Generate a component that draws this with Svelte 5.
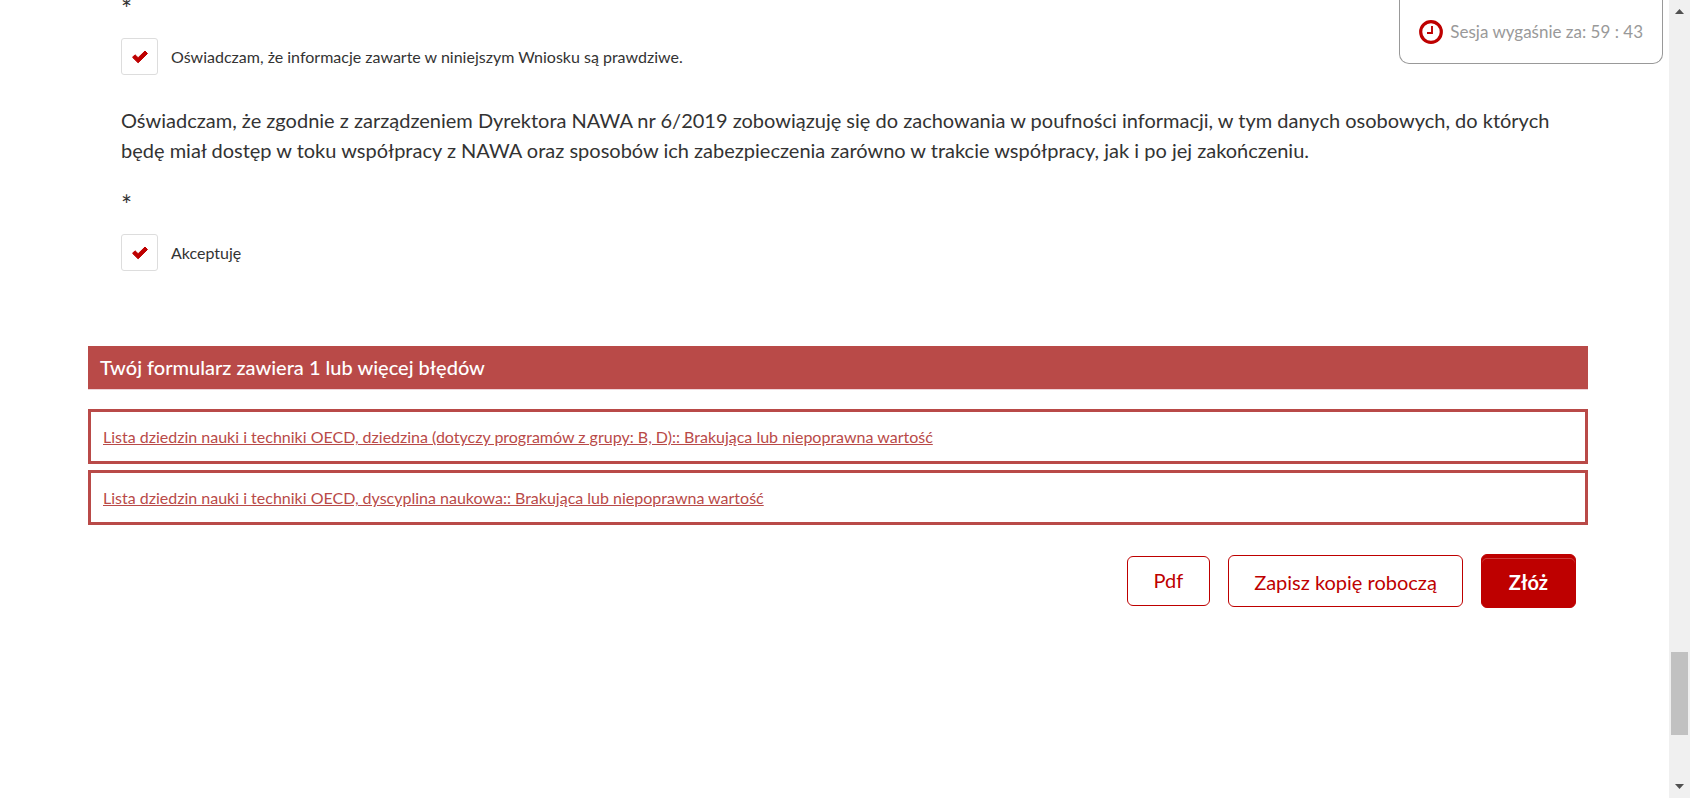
<script>
  let truthful = $state(true);
  let accepted = $state(true);
  const errors = [
    { id: 'dziedzina', text: 'Lista dziedzin nauki i techniki OECD, dziedzina (dotyczy programów z grupy: B, D):: Brakująca lub niepoprawna wartość' },
    { id: 'dyscyplina', text: 'Lista dziedzin nauki i techniki OECD, dyscyplina naukowa:: Brakująca lub niepoprawna wartość' }
  ];
</script>

{#snippet tick()}
  <svg class="tick" viewBox="0 0 16 14" aria-hidden="true">
    <path d="M0.5 7.3 L3 4.8 L6.1 7.7 L13 1 L15.5 3.5 L6.1 12.8 Z" />
  </svg>
{/snippet}

<div class="window">
  <main>
    <form onsubmit={(e) => e.preventDefault()}>
      <section class="statements">
        <p class="required">*</p>
        <label class="check">
          <input type="checkbox" bind:checked={truthful} />
          <span class="box">{@render tick()}</span>
          <span>Oświadczam, że informacje zawarte w niniejszym Wniosku są prawdziwe.</span>
        </label>
        <p class="text">
          Oświadczam, że zgodnie z zarządzeniem Dyrektora NAWA nr 6/2019 zobowiązuję się do zachowania w poufności informacji, w tym danych osobowych, do których będę miał dostęp w toku współpracy z NAWA oraz sposobów ich zabezpieczenia zarówno w trakcie współpracy, jak i po jej zakończeniu.
        </p>
        <p class="required">*</p>
        <label class="check">
          <input type="checkbox" bind:checked={accepted} />
          <span class="box">{@render tick()}</span>
          <span>Akceptuję</span>
        </label>
      </section>

      <section class="errors">
        <h2>Twój formularz zawiera 1 lub więcej błędów</h2>
        <ul>
          {#each errors as error (error.id)}
            <li><a href={'#' + error.id}>{error.text}</a></li>
          {/each}
        </ul>
      </section>

      <div class="actions">
        <button type="button" class="pdf">Pdf</button>
        <button type="button" class="draft">Zapisz kopię roboczą</button>
        <button type="submit" class="submit">Złóż</button>
      </div>
    </form>

    <div class="session">
      <svg viewBox="0 0 24 24" aria-hidden="true">
        <circle cx="12" cy="12" r="10.3" fill="none" stroke="#be0000" stroke-width="3.2" />
        <path d="M13 6 V13 H8" fill="none" stroke="#be0000" stroke-width="1.9" />
      </svg>
      <span>Sesja wygaśnie za: 59 : 43</span>
    </div>
  </main>

  <div class="scrollbar" aria-hidden="true">
    <svg viewBox="0 0 9 5"><path d="M0 5 L4.5 0 L9 5 Z" /></svg>
    <div class="track"><div class="thumb"></div></div>
    <svg viewBox="0 0 9 5"><path d="M0 0 L4.5 5 L9 0 Z" /></svg>
  </div>
</div>

<style>
  :global(body) {
    margin: 0;
    background: #fff;
  }
  .window {
    display: flex;
    height: 100vh;
    overflow: hidden;
    font-family: Lato, sans-serif;
    font-size: 16px;
    color: #333;
  }
  main {
    position: relative;
    flex: 1;
    min-width: 0;
    overflow: hidden;
  }
  form {
    margin: -9px 81px 0 88px;
  }
  .statements {
    padding: 0 33px;
  }
  p {
    margin: 0;
    font-size: 20px;
    line-height: 30px;
  }
  .required {
    margin-bottom: 11px;
    font-size: 26px;
    line-height: 36px;
  }
  .text {
    margin: 30px 0 22px;
  }
  .check {
    display: flex;
    align-items: center;
    gap: 13px;
    width: fit-content;
    position: relative;
    cursor: pointer;
  }
  .check input {
    position: absolute;
    width: 37px;
    height: 37px;
    margin: 0;
    opacity: 0;
  }
  .box {
    display: grid;
    place-items: center;
    width: 37px;
    height: 37px;
    box-sizing: border-box;
    border: 1px solid #ddd;
    border-radius: 3px;
  }
  .tick {
    width: 16px;
    height: 14px;
    fill: #be0000;
    stroke: #be0000;
    stroke-linejoin: round;
    visibility: hidden;
  }
  input:checked + .box .tick {
    visibility: visible;
  }
  .errors {
    margin-top: 75px;
  }
  h2 {
    margin: 0;
    padding: 0 12px;
    background: #b94a48;
    border-bottom: 1px solid #eed3d7;
    color: #fff;
    font-size: 20px;
    font-weight: 500;
    line-height: 43px;
  }
  ul {
    display: grid;
    gap: 6px;
    margin: 19px 0 0;
    padding: 0;
    list-style: none;
  }
  li {
    padding: 12px;
    border: 3px solid #b94a48;
    line-height: 25px;
  }
  a {
    color: #b94a48;
    text-decoration: underline;
  }
  .actions {
    display: flex;
    justify-content: flex-end;
    align-items: center;
    gap: 18px;
    margin: 29px 12px 0 0;
  }
  button {
    height: 52px;
    padding: 0 26px;
    border: 1px solid #be0000;
    border-radius: 6px;
    background: #fff;
    color: #be0000;
    font-family: inherit;
    font-size: 20px;
    cursor: pointer;
  }
  .pdf {
    height: 50px;
    padding-bottom: 2px;
  }
  .draft {
    padding: 2px 25px 0;
  }
  .submit {
    height: 54px;
    padding: 2px 27px 0;
    background: #be0000;
    box-shadow: inset 0 3px 0 #be0000, inset 0 4px 0 #cd3c3c;
    color: #fff;
    font-weight: 700;
  }
  .session {
    position: absolute;
    top: 0;
    right: 6px;
    display: flex;
    align-items: center;
    gap: 7px;
    height: 63px;
    padding: 0 19px;
    border: 1px solid #999;
    border-top: 0;
    border-radius: 0 0 10px 10px;
    background: #fff;
    color: #999;
    font-size: 17px;
  }
  .session svg {
    width: 24px;
    height: 24px;
  }
  .scrollbar {
    display: flex;
    flex-direction: column;
    align-items: center;
    box-sizing: border-box;
    width: 21px;
    padding: 9px 0;
    background: #f0f0f0;
  }
  .scrollbar svg {
    width: 9px;
    height: 5px;
    fill: #505050;
  }
  .track {
    display: flex;
    flex: 1;
    flex-direction: column;
    justify-content: flex-end;
  }
  .thumb {
    width: 17px;
    height: 83px;
    margin-bottom: 49px;
    background: #c1c1c1;
  }
</style>
